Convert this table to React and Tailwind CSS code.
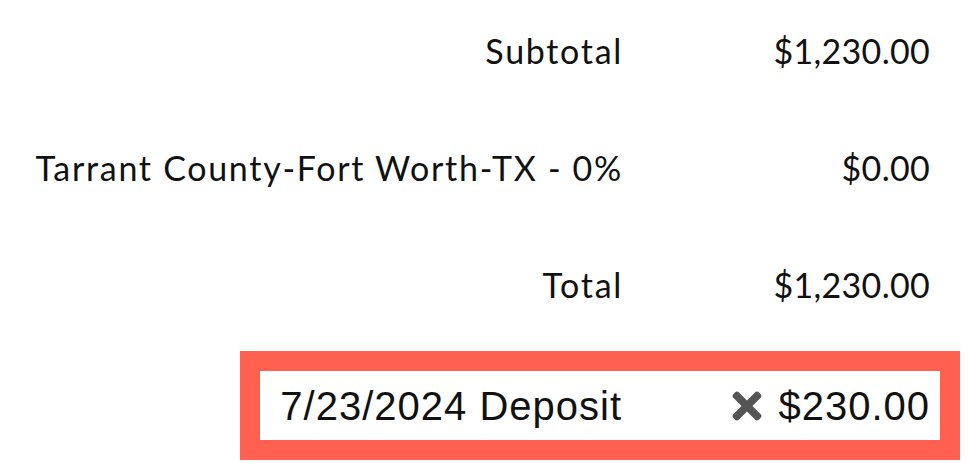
import { FaTimes } from "react-icons/fa";

const rows = [
  { label: "Subtotal", value: "$1,230.00" },
  { label: "Tarrant County-Fort Worth-TX - 0%", value: "$0.00" },
  { label: "Total", value: "$1,230.00" },
];

const App = () => {
  return (
    <main className="w-[968px] h-[474px] bg-white overflow-hidden text-[#111]">
      <section className="flex flex-col pt-[30px] gap-[77px]">
        {rows.map((row) => (
          <div
            key={row.label}
            className="flex items-center h-[40px] pr-[38px] font-['Lato',sans-serif] text-[34px]"
          >
            <p className="flex-1 text-right whitespace-nowrap tracking-[1.7px] mr-[-1px]">{row.label}</p>
            <p className="w-[308px] text-right whitespace-nowrap tracking-[0.3px]">{row.value}</p>
          </div>
        ))}
      </section>
      <div className="ml-[240px] mr-[8px] mt-[47px] border-[20px] border-[#ff604f]">
        <div className="flex items-center h-[69px] pr-[10px] font-['Liberation_Sans',Arial,sans-serif] text-[40px] tracking-[1px]">
          <p className="flex-1 text-right whitespace-nowrap">7/23/2024 Deposit</p>
          <div className="w-[308px] flex items-center justify-end">
            <button className="flex items-center mr-[10px] text-[#555]">
              <FaTimes size={42} />
            </button>
            <p className="whitespace-nowrap">$230.00</p>
          </div>
        </div>
      </div>
    </main>
  );
};

export default App;
